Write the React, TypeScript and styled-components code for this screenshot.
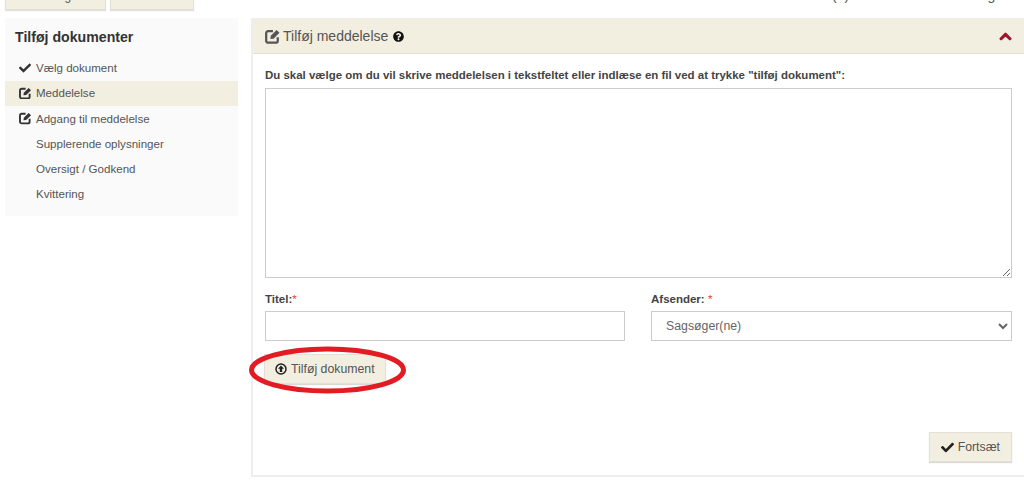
import React from "react";
import styled, { createGlobalStyle } from "styled-components";
import { FaCheck, FaChevronUp, FaQuestionCircle } from "react-icons/fa";

const Global = createGlobalStyle`
  html, body { margin: 0; padding: 0; background: #fff; overflow: hidden; }
  body { font-family: "Liberation Sans", Arial, sans-serif; color: #333; }
  * { box-sizing: border-box; }
`;
const Page = styled.div`
  width: 1024px;
  height: 487px;
  overflow: hidden;
  position: relative;
`;
const TopBar = styled.div`
  height: 18px;
  display: flex;
  align-items: flex-start;
  padding-left: 5px;
  gap: 4px;
  position: relative;
`;
const TopButton = styled.div<{ $w: number }>`
  width: ${(p) => p.$w}px;
  height: 10px;
  background: #f2eee0;
  border: 1px solid #e3e0d6;
  border-top: none;
  box-shadow: 0 1px 1px rgba(0, 0, 0, 0.12);
  overflow: hidden;
  display: flex;
  justify-content: center;
  align-items: flex-end;
  padding: 0 0 6px 6px;
  font-size: 12px;
  line-height: 14px;
  color: #555;
`;
const TopMark = styled.span`
  display: block;
  width: 9px;
  height: 2px;
  margin: 0 38px 0 0;
  transform: translateY(-3px);
  background: #fff;
`;
const Clipped = styled.div`
  position: absolute;
  left: 832px;
  top: -13px;
  font-size: 14px;
  line-height: 16px;
  color: #555;
  white-space: nowrap;
`;
const Columns = styled.div`
  display: flex;
  align-items: flex-start;
  padding-left: 5px;
  gap: 13px;
`;
const Sidebar = styled.aside`
  width: 233px;
  height: 198px;
  background: #fafafa;
  padding-top: 9px;
`;
const SideTitle = styled.h2`
  margin: 0 0 8.3px;
  padding-left: 10px;
  font-size: 14.15px;
  line-height: 20px;
  font-weight: bold;
  color: #333;
`;
const StepRow = styled.div<{ $active?: boolean }>`
  height: 25.3px;
  display: flex;
  align-items: center;
  padding-left: 14px;
  font-size: 11.55px;
  color: #555;
  background: ${(p) => (p.$active ? "#f2eee0" : "transparent")};
`;
const StepIcon = styled.span`
  width: 17px;
  display: flex;
  align-items: center;
  color: #333;
`;
const Panel = styled.section`
  width: 773px;
  height: 459px;
  border-left: 2px solid #eeeeee;
  border-top: 1px solid #eeeeee;
  border-bottom: 2px solid #eeeeee;
`;
const PanelHead = styled.header`
  height: 35px;
  background: #f2eee0;
  border-bottom: 1px solid #e3e0d6;
  display: flex;
  align-items: center;
  padding: 0 12px;
  font-size: 14px;
  color: #555;
`;
const HeadTitle = styled.span`
  margin-left: 3px;
  margin-right: 5px;
`;
const Collapse = styled.span`
  margin-left: auto;
  display: flex;
  color: #a0122c;
`;
const PanelBody = styled.div`
  padding: 13px 12px 0 12px;
  position: relative;
  height: 422px;
`;
const Lead = styled.p`
  margin: 0 0 5px;
  font-size: 11.47px;
  line-height: 16px;
  font-weight: bold;
  color: #444;
  white-space: nowrap;
`;
const Area = styled.textarea`
  display: block;
  width: 747px;
  height: 190px;
  border: 1px solid #ccc;
  background: #fff;
  margin: 0 0 13px;
  outline: none;
`;
const FormRow = styled.div`
  display: grid;
  grid-template-columns: 360px 361px;
  column-gap: 26px;
`;
const Field = styled.div`
  display: flex;
  flex-direction: column;
`;
const Label = styled.label`
  font-size: 11.5px;
  line-height: 16px;
  font-weight: bold;
  color: #444;
  margin-bottom: 4px;
`;
const Star = styled.span`
  color: #e53935;
  font-weight: normal;
`;
const TextInput = styled.input`
  height: 30px;
  border: 1px solid #ccc;
  outline: none;
  background: #fff;
`;
const SelectBox = styled.select`
  height: 30px;
  border: 1px solid #ccc;
  background: #fff;
  padding-left: 10px;
  font-family: inherit;
  font-size: 12.3px;
  color: #666;
  outline: none;
`;
const ActionButton = styled.button`
  display: inline-flex;
  align-items: center;
  gap: 4px;
  height: 30px;
  padding: 0 10px;
  background: #f2eee0;
  border: 1px solid #e3e0d6;
  box-shadow: 0 1px 1px rgba(0, 0, 0, 0.15);
  font-family: inherit;
  font-size: 12.3px;
  color: #555;
`;
const UploadWrap = styled.div`
  margin: 13px 0 0 -1px;
  position: relative;
  width: fit-content;
`;
const Ring = styled.svg`
  position: absolute;
  left: -15px;
  top: -8px;
  pointer-events: none;
`;
const Continue = styled(ActionButton)`
  position: absolute;
  right: 12px;
  top: 378px;
  padding: 0 11px;
  color: #555;
`;
const ContinueIcon = styled.span`
  display: flex;
  color: #222;
`;
const BoldChevron = styled(FaChevronUp)`
  stroke: currentColor;
  stroke-width: 40px;
`;

const Edit = ({ s = 12.5 }: { s?: number }) => (
  <svg width={s} height={s} viewBox="0 0 14 14" fill="none">
    <path d="M7.4 2H3A1.9 1.9 0 0 0 1.1 3.9v7A1.9 1.9 0 0 0 3 12.8h7a1.9 1.9 0 0 0 1.9-1.9V7.6" stroke="currentColor" strokeWidth="2.1" />
    <path d="M5 9.3 5.4 6.4 10.8 1 13.5 3.6 8 9Z" fill="currentColor" />
  </svg>
);
const Up = () => (
  <svg width="12" height="12" viewBox="0 0 12 12">
    <circle cx="6" cy="6" r="5" fill="none" stroke="#222" strokeWidth="1.5" />
    <path d="M6 2.6 9 5.8H7.2V9H4.8V5.8H3Z" fill="#222" />
  </svg>
);

const steps = [
  { label: "Vælg dokument", icon: <FaCheck size={12} /> },
  { label: "Meddelelse", icon: <Edit />, active: true },
  { label: "Adgang til meddelelse", icon: <Edit /> },
  { label: "Supplerende oplysninger" },
  { label: "Oversigt / Godkend" },
  { label: "Kvittering" },
];

export default function App() {
  return (
    <Page>
      <Global />
      <TopBar>
        <TopButton $w={101}>Tilbage</TopButton>
        <TopButton $w={84}>
          <TopMark />
        </TopButton>
        <Clipped>(?) Information om løsning</Clipped>
      </TopBar>
      <Columns>
        <Sidebar>
          <SideTitle>Tilføj dokumenter</SideTitle>
          {steps.map((s) => (
            <StepRow key={s.label} $active={s.active}>
              <StepIcon>{s.icon}</StepIcon>
              {s.label}
            </StepRow>
          ))}
        </Sidebar>
        <Panel>
          <PanelHead>
            <Edit s={15} />
            <HeadTitle>Tilføj meddelelse</HeadTitle>
            <FaQuestionCircle size={11} color="#111" />
            <Collapse>
              <BoldChevron size={13} />
            </Collapse>
          </PanelHead>
          <PanelBody>
            <Lead>Du skal vælge om du vil skrive meddelelsen i tekstfeltet eller indlæse en fil ved at trykke "tilføj dokument":</Lead>
            <Area />
            <FormRow>
              <Field>
                <Label>
                  Titel:<Star>*</Star>
                </Label>
                <TextInput />
              </Field>
              <Field>
                <Label>
                  Afsender: <Star>*</Star>
                </Label>
                <SelectBox defaultValue="s">
                  <option value="s">Sagsøger(ne)</option>
                </SelectBox>
              </Field>
            </FormRow>
            <UploadWrap>
              <ActionButton>
                <Up />
                Tilføj dokument
              </ActionButton>
              <Ring width="158" height="48" viewBox="0 0 158 48">
                <ellipse cx="78.5" cy="24" rx="76" ry="21" fill="none" stroke="#e31b23" strokeWidth="5" />
              </Ring>
            </UploadWrap>
            <Continue>
              <ContinueIcon>
                <FaCheck size={13} />
              </ContinueIcon>
              Fortsæt
            </Continue>
          </PanelBody>
        </Panel>
      </Columns>
    </Page>
  );
}
